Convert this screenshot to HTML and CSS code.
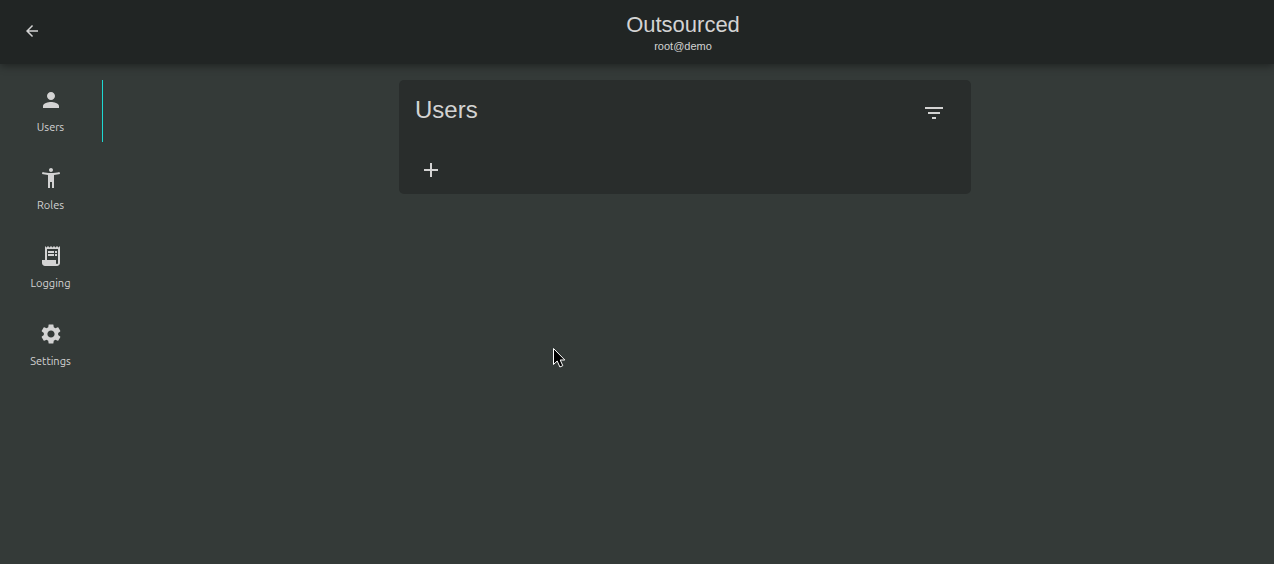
FILE: index.html
```html
<!DOCTYPE html>
<html lang="en">
<head>
<meta charset="utf-8">
<meta name="viewport" content="width=device-width, initial-scale=1">
<title>Outsourced</title>
<link rel="stylesheet" href="styles.css">
</head>
<body>
<header class="topbar">
  <button class="icon-button back" type="button" aria-label="Back">
    <svg class="icon icon-small" viewBox="0 0 24 24"><path d="M20 11H7.83l5.59-5.59L12 4l-8 8 8 8 1.41-1.41L7.83 13H20v-2z"/></svg>
  </button>
  <div class="heading">
    <h1 class="title">Outsourced</h1>
    <p class="subtitle">root@demo</p>
  </div>
</header>
<div class="layout">
  <nav class="sidebar" aria-label="Sections">
    <a class="nav-item active" href="#users" aria-current="page">
      <svg class="icon" viewBox="0 0 24 24"><path d="M12 12c2.21 0 4-1.79 4-4s-1.79-4-4-4-4 1.79-4 4 1.79 4 4 4zm0 2c-2.67 0-8 1.34-8 4v2h16v-2c0-2.66-5.33-4-8-4z"/></svg>
      <span>Users</span>
    </a>
    <a class="nav-item" href="#roles">
      <svg class="icon" viewBox="0 0 24 24"><path d="M20.5 6c-2.61.7-5.67 1-8.5 1s-5.89-.3-8.500-1L3 8c1.860.5 4 .83 6 1v13h2v-6h2v6h2V9c2-.17 4.140-.5 6-1l-.5-2zM12 6c1.100 0 2-.9 2-2s-.9-2-2-2-2 .9-2 2 .9 2 2 2z"/></svg>
      <span>Roles</span>
    </a>
    <a class="nav-item" href="#logging">
      <svg class="icon" viewBox="0 0 24 24"><path d="M19.5 3.5L18 2l-1.5 1.5L15 2l-1.5 1.5L12 2l-1.5 1.5L9 2 7.500 3.500 6 2v14H3v3c0 1.660 1.340 3 3 3h12c1.660 0 3-1.340 3-3V2l-1.500 1.500zM19 19c0 .55-.45 1-1 1s-1-.45-1-1v-3H8V5h11v14z"/><path d="M9 7h6v2H9zM16 7h2v2h-2zM9 10h6v2H9zM16 10h2v2h-2z"/></svg>
      <span>Logging</span>
    </a>
    <a class="nav-item" href="#settings">
      <svg class="icon" viewBox="0 0 24 24"><path d="M19.14 12.94c.04-.3.06-.61.06-.94 0-.32-.02-.64-.07-.94l2.03-1.58c.18-.14.23-.41.12-.61l-1.92-3.32c-.12-.22-.37-.29-.59-.22l-2.39.96c-.5-.38-1.03-.7-1.62-.94l-.36-2.54c-.04-.24-.24-.41-.48-.41h-3.84c-.24 0-.43.17-.47.41l-.36 2.54c-.59.24-1.13.57-1.62.94l-2.39-.96c-.22-.08-.47 0-.59.22L2.740 8.870c-.12.21-.08.47.12.61l2.03 1.58c-.05.3-.09.63-.09.94s.02.64.07.94l-2.03 1.58c-.18.14-.23.41-.12.61l1.920 3.320c.12.22.37.29.59.22l2.390-.96c.5.38 1.030.7 1.620.94l.36 2.540c.05.24.24.41.48.41h3.840c.24 0 .44-.17.47-.41l.36-2.540c.59-.24 1.130-.56 1.620-.94l2.390.96c.22.08.47 0 .59-.22l1.920-3.320c.12-.22.07-.47-.12-.61l-2.010-1.580zM12 15.600c-1.980 0-3.600-1.620-3.600-3.600s1.620-3.600 3.600-3.600 3.600 1.620 3.600 3.600-1.620 3.600-3.600 3.600z"/></svg>
      <span>Settings</span>
    </a>
  </nav>
  <main class="content">
    <section class="card" aria-labelledby="users-title">
      <div class="card-header">
        <h2 class="card-title" id="users-title">Users</h2>
        <button class="icon-button filter" type="button" aria-label="Filter">
          <svg class="icon" viewBox="0 0 24 24"><path d="M10 18h4v-2h-4v2zM3 6v2h18V6H3zm3 7h12v-2H6v2z"/></svg>
        </button>
      </div>
      <button class="icon-button add" type="button" aria-label="Add user">
        <svg class="icon" viewBox="0 0 24 24"><path d="M19 13h-6v6h-2v-6H5v-2h6V5h2v6h6v2z"/></svg>
      </button>
    </section>
  </main>
</div>
<svg class="pointer" viewBox="0 0 14 22" aria-hidden="true"><path d="M1.500 1.500v16l3.700-3.500 2.700 6 2.900-1.300-2.600-5.700h4.600z"/></svg>
</body>
</html>
```
FILE: styles.css
```css
* {
  box-sizing: border-box;
}

body {
  margin: 0;
  min-height: 100vh;
  background: #343a38;
  color: #d3d3d3;
  font-family: "Liberation Sans", Arial, sans-serif;
}

h1, h2, p {
  margin: 0;
  font-weight: 400;
}

.icon {
  display: block;
  width: 24px;
  height: 24px;
  fill: currentColor;
}

.icon-small {
  width: 18px;
  height: 18px;
}

.icon-button {
  display: grid;
  place-items: center;
  width: 32px;
  height: 32px;
  padding: 0;
  border: 0;
  background: none;
  color: inherit;
  cursor: pointer;
}

.topbar {
  position: relative;
  display: grid;
  grid-template-columns: 76px 1fr;
  align-items: start;
  min-height: 64px;
  padding: 12px 0 8px 16px;
  background: #212524;
  box-shadow: 0 2px 8px rgba(0, 0, 0, 0.4);
}

.back {
  height: 38px;
}

.heading {
  text-align: center;
}

.title {
  font-size: 22px;
  line-height: 26px;
}

.subtitle {
  font-size: 11px;
  line-height: 16px;
}

.layout {
  display: grid;
  grid-template-columns: 103px 1fr;
  padding-top: 16px;
}

.sidebar {
  display: flex;
  flex-direction: column;
  gap: 16px;
}

.nav-item {
  display: flex;
  flex-direction: column;
  align-items: center;
  gap: 8px;
  height: 62px;
  padding: 8px 1px 0 0;
  border-right: 1px solid transparent;
  color: inherit;
  font-family: Ubuntu, "Noto Sans", sans-serif;
  font-size: 11px;
  line-height: 14px;
  text-decoration: none;
}

.nav-item.active {
  border-color: #1ed8d2;
}

.content {
  padding-right: 7px;
}

.card {
  width: 100%;
  max-width: 572px;
  margin: 0 auto;
  padding: 16px 16px 8px;
  border-radius: 5px;
  background: #292d2c;
}

.card-header {
  display: flex;
  justify-content: space-between;
  margin-bottom: 24px;
}

.card-title {
  font-size: 24px;
  line-height: 28px;
}

.filter {
  height: 34px;
  margin-right: 5px;
}

.pointer {
  position: absolute;
  left: 552px;
  top: 347px;
  width: 14px;
  height: 22px;
  fill: #000;
  stroke: #fff;
  stroke-width: 1;
}
```
